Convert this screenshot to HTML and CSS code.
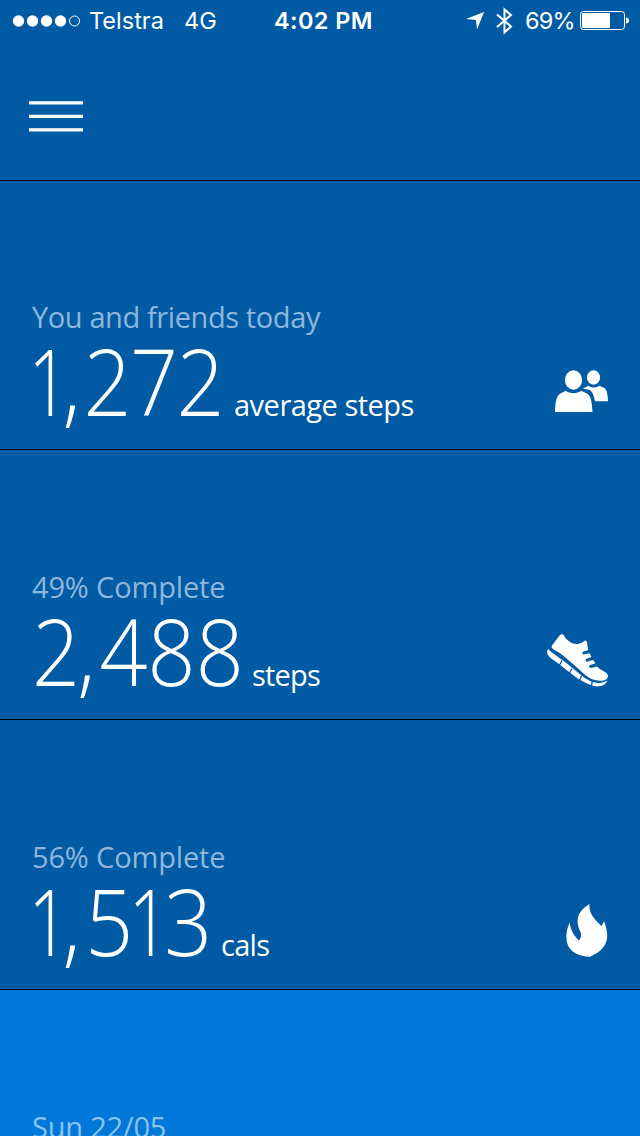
FILE: index.html
```html
<!DOCTYPE html>
<html lang="en">
  <head>
    <meta charset="UTF-8" />
    <meta name="viewport" content="width=device-width, initial-scale=1.0" />
    <title>Daily Activity</title>
    <link rel="stylesheet" href="styles.css">
  </head>
  <body>
    <!-- Status Bar -->
    <div class="status-bar">
      <svg class="signal" width="70" height="12" viewBox="0 0 70 12">
        <g fill="#fff">
          <circle cx="6.5" cy="6" r="5.7" />
          <circle cx="20.5" cy="6" r="5.7" />
          <circle cx="34.5" cy="6" r="5.7" />
          <circle cx="48.5" cy="6" r="5.7" />
        </g>
        <circle cx="62.5" cy="6" r="5" fill="none" stroke="#fff" />
      </svg>
      <span class="carrier">Telstra</span>
      <span class="network">4G</span>
      <span class="time">4:02 PM</span>
      <svg class="location" width="19" height="18" viewBox="0 0 19 18">
        <path d="M18 0L11 17.5L10 8L0 7Z" fill="#fff" />
      </svg>
      <svg class="bluetooth" width="17" height="28" viewBox="0 0 17 28">
        <path d="M1 7.5L15 19.5L8.5 25.5V2.5L15 8L1 20" fill="none" stroke="#fff" stroke-width="2" />
      </svg>
      <span class="percent">69%</span>
      <svg class="battery" width="50" height="20" viewBox="0 0 50 20">
        <rect x="0.5" y="0.5" width="44" height="18" rx="3" fill="none" stroke="#fff" />
        <rect x="2" y="2" width="28" height="15" rx="1" fill="#fff" />
        <path d="M46 6.5Q49 7 49 9.5T46 12.5Z" fill="#fff" />
      </svg>
    </div>

    <header>
      <button class="menu" aria-label="Menu">
        <svg width="54" height="32" viewBox="0 0 54 32">
          <path d="M0 2.9H54M0 16.4H54M0 29.9H54" stroke="#fff" stroke-width="3.2" />
        </svg>
      </button>
    </header>

    <main>
      <!-- Friends -->
      <section class="tile tile-first">
        <p class="label label-friends">You and friends today</p>
        <div class="row">
          <p class="value"><span class="number number-friends"><span class="one">1</span><span class="comma">,</span>272</span><span class="unit">average steps</span></p>
          <svg class="icon-friends" width="54" height="42" viewBox="0 0 54 42">
            <g fill="#fff">
              <ellipse cx="18.5" cy="10" rx="8.6" ry="9.7" />
              <path d="M0 42C0.3 32 1.5 25.5 5.5 23.5C7.5 22.5 9 22 10.5 20.8C15 24 22 24 26.5 20.8C28 22 30 22.5 32 23.5C36 26 37 32 37.5 42Z" />
              <ellipse cx="38.5" cy="7.5" rx="6.6" ry="7.2" />
              <path d="M28 18.5C30 17.5 32 17 33 15.8C36.5 18 41 18 44.5 15.7C46 17 49 17 50.5 19C52.5 22 52.8 27 53 31.3H40C39 26 38 22 34.5 20C32.5 19 30 19.3 28 18.5Z" />
            </g>
          </svg>
        </div>
      </section>

      <!-- Steps -->
      <section class="tile">
        <p class="label label-goal">49% Complete</p>
        <div class="row">
          <p class="value"><span class="number number-steps">2<span class="comma">,</span>488</span><span class="unit unit-steps">steps</span></p>
          <svg class="icon-steps" width="62" height="54" viewBox="0 0 62 54">
            <path d="M5.3 12L13 2Q15 0.5 17 2.5C20 8 25 11 29.7 11C34 11 36 8.500 38.2 7.500Q39.5 7.500 40 9.500L41.2 17L36 18.8Q34.5 20.5 36.5 21.6L42.5 20.3L44.5 24L39 26Q37.700 28.300 40 28.8L46 27L48.5 30.3L42.5 32.3Q41 34.5 44 35L50 33.5C53 37 57 37.5 60 40.5C62 43.5 60.5 46.5 57.5 47.2C53 48.5 47 47.5 43 45.3C37 41.5 33 37 28 32.7C22 28 18 23.5 13 20.3L7.5 17C4.5 15.500 4 14 5.3 12Z" fill="#fff" />
            <path d="M1.3 16Q2.5 17.7 4 18.7C8 22 12 24.5 16.3 27.7C22 32 26 35.5 31.3 39.7C35 43 39 46 43 48C48 50.2 55 51 60.3 47.5Q60 49 58.7 50.3C57 52.5 54 53.5 51.3 53.3C48 53.3 44.5 52.5 41.3 51C37 49 32 46.5 28 43.5C22 39.5 17 34.5 11.3 30.5C8 28 3.5 25.5 1.3 22.5Q-1 19 1.3 16Z" fill="#fff" />
            <path d="M15 27.5L12.5 32M25 35.5L22.5 40M34.5 43L32.5 47.5M45.5 48L44 53.5" stroke="#005ba4" stroke-width="1.3" />
          </svg>
        </div>
      </section>

      <!-- Calories -->
      <section class="tile">
        <p class="label label-goal">56% Complete</p>
        <div class="row">
          <p class="value"><span class="number number-cals"><span class="one">1</span><span class="comma">,</span>5<span class="one one-middle">1</span>3</span><span class="unit unit-cals">cals</span></p>
          <svg class="icon-cals" width="42" height="53" viewBox="0 0 42 53">
            <path d="M23.5 0C22.5 9 28 15 35.5 22C37 20 37.5 18.5 38 17C41 24 42 32 40.5 37C38 45 32 49 24 52.8C13 52.5 4 48 1.5 40C-1 31 1 25 3.7 18.5C4.5 26 8 32 13 36.5C15 34 15.5 31 14.5 28C9.5 18 10 8 23.5 0Z" fill="#fff" />
          </svg>
        </div>
      </section>

      <!-- Previous Day -->
      <section class="tile tile-day">
        <p class="label label-day">Sun 22/05</p>
      </section>
    </main>
  </body>
</html>
```

FILE: styles.css
```css
* {
  box-sizing: border-box;
}
body {
  display: flex;
  flex-direction: column;
  height: 1136px;
  margin: 0;
  overflow: hidden;
  background-color: #005ba4;
  color: white;
  font-family: "Open Sans", "Noto Sans", sans-serif;
}
p {
  margin: 0;
}
svg {
  display: block;
  flex-shrink: 0;
}
.status-bar {
  display: flex;
  align-items: center;
  height: 40px;
  padding-top: 1px;
  padding-left: 12px;
  font-family: Inter, sans-serif;
  font-size: 23.5px;
  line-height: 40px;
  white-space: nowrap;
}
.carrier {
  width: 95px;
  padding-left: 7px;
}
.network {
  width: 97px;
  padding-left: 7px;
}
.time {
  width: 192px;
  font-weight: 600;
  letter-spacing: 0.4px;
}
.bluetooth {
  margin-left: 11px;
}
.percent {
  width: 55px;
  margin-left: 12px;
  letter-spacing: -0.8px;
}
header {
  height: 141px;
  padding: 60px 29px 0;
  border-bottom: 1px solid #000;
}
.menu {
  display: block;
  padding: 0;
  border: none;
  background: none;
}
.tile {
  display: flex;
  flex-direction: column;
  justify-content: flex-end;
  height: 270px;
  padding: 0 32px 18px;
  border-bottom: 1px solid #000;
}
.tile-first {
  height: 269px;
}
.label {
  height: 40px;
  color: #8fb7dc;
  font-size: 29px;
  line-height: 40px;
  white-space: nowrap;
}
.label-friends {
  letter-spacing: -0.4px;
}
.label-goal {
  letter-spacing: -0.15px;
}
.row {
  display: flex;
  justify-content: space-between;
  align-items: flex-end;
  height: 94px;
}
.value {
  display: flex;
  align-items: baseline;
  white-space: nowrap;
}
.number {
  font-size: 91.5px;
  font-weight: 300;
  line-height: 100px;
  letter-spacing: -1.6px;
  transform: scaleX(0.92);
  transform-origin: left;
}
.one {
  display: inline-block;
  margin-left: -4px;
  letter-spacing: -15px;
  transform: scaleX(0.85);
  transform-origin: left;
}
.comma {
  letter-spacing: 3px;
}
.unit {
  font-size: 29px;
  line-height: 29px;
  letter-spacing: -0.5px;
}
.number-friends {
  width: 202px;
}
.number-steps {
  width: 220px;
  letter-spacing: 0;
}
.number-steps .comma {
  margin-left: -3px;
  letter-spacing: 4.5px;
}
.unit-steps {
  letter-spacing: -0.8px;
}
.number-cals {
  width: 189px;
}
.number-cals .comma {
  letter-spacing: 5px;
}
.number-cals .one-middle {
  margin-left: -4px;
  letter-spacing: -13px;
}
.unit-cals {
  letter-spacing: -0.7px;
}
.icon-friends {
  margin-right: -1px;
  margin-bottom: 19px;
}
.icon-steps {
  margin-right: -1px;
  margin-bottom: 14px;
}
.icon-cals {
  margin-bottom: 14px;
}
.tile-day {
  justify-content: flex-start;
  height: 146px;
  padding: 117px 32px 0;
  border-bottom: none;
  background-color: #0078d9;
}
.label-day {
  color: #8cc3f0;
  letter-spacing: -0.2px;
}
```
